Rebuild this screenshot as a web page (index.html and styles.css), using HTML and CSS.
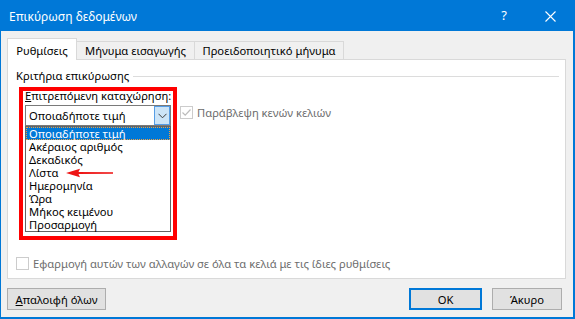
FILE: index.html
```html
<!DOCTYPE html>
<html lang="el">
<head>
    <meta charset="UTF-8">
    <meta name="viewport" content="width=device-width, initial-scale=1.0">
    <title>Επικύρωση δεδομένων</title>
    <link rel="stylesheet" href="styles.css">
</head>
<body>
    <div class="window">
        <div class="titlebar">
            <span class="title">Επικύρωση δεδομένων</span>
            <span class="caption-btn help">?</span>
            <span class="caption-btn close">
                <svg width="11" height="11" viewBox="0 0 11 11">
                    <path d="M0.5 0.5 L10.5 10.5 M10.5 0.5 L0.5 10.5" stroke="#fff" stroke-width="1.1" fill="none"/>
                </svg>
            </span>
        </div>
        <div class="content">
            <div class="tabs">
                <div class="tab active tab-settings">Ρυθμίσεις</div>
                <div class="tab tab-input">Μήνυμα εισαγωγής</div>
                <div class="tab tab-alert">Προειδοποιητικό μήνυμα</div>
            </div>
            <div class="panel">
                <div class="group-title">
                    <span>Κριτήρια επικύρωσης</span>
                    <span class="line"></span>
                </div>
                <div class="criteria">
                    <div class="allow">
                        <div class="allow-label"><u>Ε</u>πιτρεπόμενη καταχώρηση:</div>
                        <div class="combo">
                            <span class="combo-value">Οποιαδήποτε τιμή</span>
                            <span class="combo-button">
                                <svg width="9" height="6" viewBox="0 0 9 6">
                                    <path d="M0.5 0.8 L4.5 4.8 L8.5 0.8" stroke="#3c3c3c" stroke-width="1" fill="none"/>
                                </svg>
                            </span>
                        </div>
                        <ul class="list">
                            <li class="selected">Οποιαδήποτε τιμή</li>
                            <li>Ακέραιος αριθμός</li>
                            <li>Δεκαδικός</li>
                            <li>Λίστα</li>
                            <li>Ημερομηνία</li>
                            <li>Ώρα</li>
                            <li>Μήκος κειμένου</li>
                            <li>Προσαρμογή</li>
                        </ul>
                    </div>
                    <label class="check ignore">
                        <span class="box">
                            <svg width="11" height="11" viewBox="0 0 11 11">
                                <path d="M1.5 5.5 L4.2 8.2 L9.5 2.5" stroke="#bcbcbc" stroke-width="1.2" fill="none"/>
                            </svg>
                        </span>
                        <span>Παράβλεψη κενών κελιών</span>
                    </label>
                    <div class="red-frame"></div>
                    <svg class="red-arrow" width="48" height="10" viewBox="0 0 48 10">
                        <path d="M0 5 L14 0.8 L12.5 4 L47 4.3 L47 5.7 L12.5 6 L14 9.2 Z" fill="#ee1515"/>
                    </svg>
                </div>
                <label class="check apply">
                    <span class="box"></span>
                    <span>Εφαρμογή αυτών των αλλαγών σε όλα τα κελιά με τις ίδιες ρυθμίσεις</span>
                </label>
            </div>
            <div class="buttons">
                <button class="btn btn-clear"><u>Α</u>παλοιφή όλων</button>
                <button class="btn btn-ok">OK</button>
                <button class="btn btn-cancel">Άκυρο</button>
            </div>
        </div>
    </div>
</body>
</html>
```

FILE: styles.css
```css
body {
    margin: 0;
    padding: 0;
    font-family: "Noto Sans", sans-serif;
    font-size: 11.2px;
    color: #000;
}
.window {
    width: 575px;
    height: 319px;
    box-sizing: border-box;
    border: 1px solid #0078d7;
    border-right-width: 2px;
    border-bottom-width: 2px;
    background-color: #f0f0f0;
    overflow: hidden;
}
.titlebar {
    height: 30px;
    background-color: #0078d7;
    color: #fff;
    display: flex;
    align-items: center;
}
.title {
    flex: 1;
    padding-left: 8px;
    font-size: 12px;
}
.caption-btn {
    width: 46px;
    height: 30px;
    display: flex;
    align-items: center;
    justify-content: center;
}
.help {
    font-size: 13px;
    padding-bottom: 2px;
    box-sizing: border-box;
}
.close svg {
    display: block;
}
.content {
    padding: 7px 7px 0 6px;
}
.tabs {
    display: flex;
    align-items: flex-end;
    height: 21px;
    position: relative;
    z-index: 1;
}
.tab {
    box-sizing: border-box;
    height: 18px;
    padding-top: 2px;
    line-height: 14px;
    border: 1px solid #d9d9d9;
    border-bottom: none;
    background-color: #f0f0f0;
    text-align: center;
    white-space: nowrap;
    margin-left: -1px;
}
.tab.active {
    height: 22px;
    padding-top: 5px;
    background-color: #fff;
    margin-bottom: -1px;
}
.tab-settings {
    width: 70px;
    margin-left: 0;
}
.tab-input {
    width: 119px;
}
.tab-alert {
    width: 150px;
}
.panel {
    height: 220px;
    box-sizing: border-box;
    border: 1px solid #d9d9d9;
    background-color: #fff;
    padding: 0 6px 0 8px;
}
.group-title {
    display: flex;
    align-items: center;
    margin-top: 9px;
    height: 14px;
    line-height: 14px;
    white-space: nowrap;
}
.group-title .line {
    flex: 1;
    height: 1px;
    margin-left: 4px;
    background-color: #dcdcdc;
}
.criteria {
    display: flex;
    align-items: flex-start;
    margin-top: 6px;
    margin-left: 9px;
    position: relative;
}
.allow {
    width: 146px;
    flex-shrink: 0;
}
.allow-label {
    height: 13px;
    line-height: 13px;
    white-space: nowrap;
}
.combo {
    margin-top: 3px;
    height: 21px;
    box-sizing: border-box;
    border: 1px solid #7a7a7a;
    display: flex;
    align-items: flex-start;
    background-color: #fff;
}
.combo-value {
    flex: 1;
    padding-left: 3px;
    line-height: 19px;
    white-space: nowrap;
}
.combo-button {
    width: 16px;
    height: 19px;
    box-sizing: border-box;
    border: 1px solid #569de5;
    background-color: #cce4f7;
    display: flex;
    align-items: center;
    justify-content: center;
}
.list {
    margin: 0;
    padding: 0;
    list-style: none;
    border: 1px solid #646464;
    background-color: #fff;
}
.list li {
    height: 13px;
    line-height: 13px;
    padding-left: 3px;
    white-space: nowrap;
}
.list li.selected {
    background-color: #0078d7;
    color: #fff;
    outline: 1px dotted #f0a040;
    outline-offset: -1px;
}
.check {
    display: flex;
    align-items: center;
    gap: 4px;
    color: #6d6d6d;
    white-space: nowrap;
}
.box {
    width: 13px;
    height: 13px;
    box-sizing: border-box;
    border: 1px solid #cccccc;
    background-color: #fff;
    display: flex;
    align-items: center;
    justify-content: center;
}
.box svg {
    display: block;
}
.ignore {
    margin-left: 9px;
    margin-top: 17px;
    line-height: 13px;
}
.apply {
    margin-top: 25px;
    line-height: 13px;
}
.red-frame {
    position: absolute;
    left: -6px;
    top: -2px;
    width: 158px;
    height: 153px;
    box-sizing: border-box;
    border: 4px solid #ff0000;
}
.red-arrow {
    position: absolute;
    left: 41px;
    top: 79px;
}
.buttons {
    display: flex;
    margin-top: 9px;
}
.btn {
    height: 22px;
    box-sizing: border-box;
    border: 1px solid #adadad;
    background-color: #e1e1e1;
    font-family: inherit;
    font-size: 11.2px;
    color: #000;
    padding: 0;
    white-space: nowrap;
}
.btn-clear {
    width: 99px;
}
.btn-ok {
    width: 73px;
    margin-left: auto;
    margin-right: 10px;
    border: 2px solid #0078d7;
}
.btn-cancel {
    width: 70px;
    margin-right: 4px;
}
```
